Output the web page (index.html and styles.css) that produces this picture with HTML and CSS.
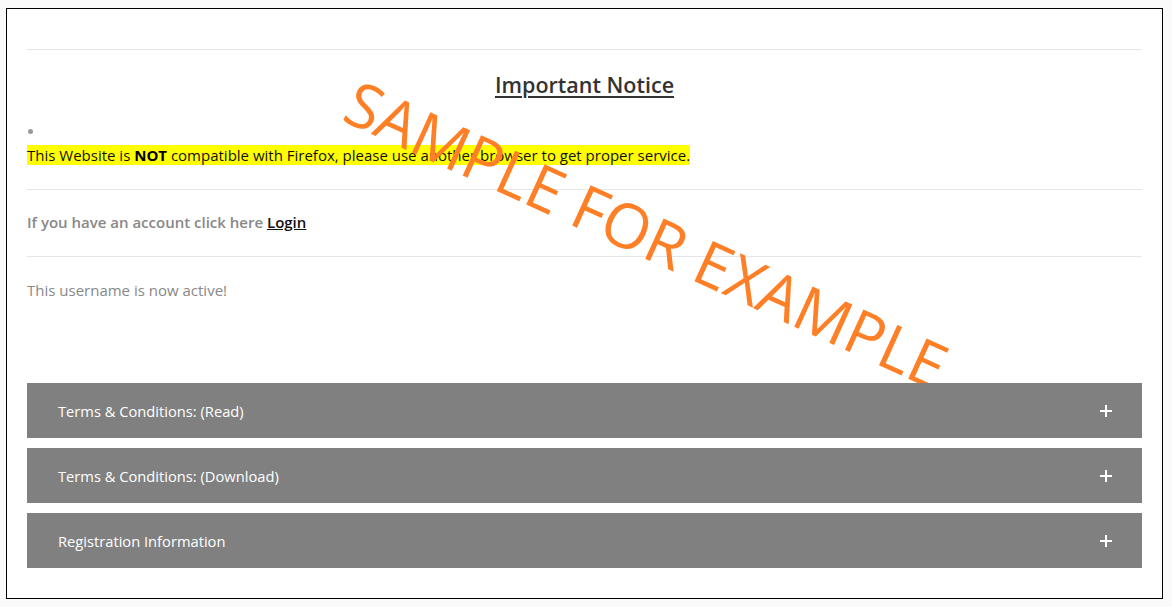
FILE: index.html
```html
<!DOCTYPE html>
<html lang="en">
<head>
<meta charset="utf-8">
<title>Important Notice</title>
<link rel="stylesheet" href="styles.css">
</head>
<body>
<div class="frame">
  <div class="rule top-rule"></div>
  <h2 class="title">Important Notice</h2>
  <div class="notice">
    <span class="dot"></span>
    <p class="warn"><mark>This Website is <b>NOT</b> compatible with Firefox, please use another browser to get proper service.</mark></p>
  </div>
  <div class="rule"></div>
  <p class="account">If you have an account click here <a href="#">Login</a></p>
  <div class="rule"></div>
  <p class="status">This username is now active!</p>
  <div class="accordion">
    <div class="acc-item"><span>Terms &amp; Conditions: (Read)</span><svg class="plus" width="12" height="12" viewBox="0 0 12 12"><rect x="5" y="0" width="2" height="12" fill="#fff"/><rect x="0" y="5" width="12" height="2" fill="#fff"/></svg></div>
    <div class="acc-item"><span>Terms &amp; Conditions: (Download)</span><svg class="plus" width="12" height="12" viewBox="0 0 12 12"><rect x="5" y="0" width="2" height="12" fill="#fff"/><rect x="0" y="5" width="12" height="2" fill="#fff"/></svg></div>
    <div class="acc-item"><span>Registration Information</span><svg class="plus" width="12" height="12" viewBox="0 0 12 12"><rect x="5" y="0" width="2" height="12" fill="#fff"/><rect x="0" y="5" width="12" height="2" fill="#fff"/></svg></div>
  </div>
  <div class="watermark">SAMPLE FOR EXAMPLE</div>
</div>
</body>
</html>
```
FILE: styles.css
```css
html, body {
  background: #fafafa;
}
body {
  margin: 8px 9px 8px 6px;
  font-family: "Open Sans", "Liberation Sans", sans-serif;
}
.frame {
  position: relative;
  background: #fff;
  border: 1px solid #000;
  height: 589px;
  padding: 0 20px;
  box-sizing: content-box;
  overflow: hidden;
}
.rule {
  height: 1px;
  background: #e6e6e6;
}
.top-rule {
  margin-top: 40px;
}
.title {
  margin: 20px 0 0;
  text-align: center;
  font-size: 21.5px;
  line-height: 30px;
  font-weight: 600;
  color: #333;
  text-decoration: underline;
  text-underline-offset: 3px;
  text-decoration-thickness: 2px;
}
.notice {
  padding-top: 29px;
  padding-bottom: 24px;
}
.dot {
  display: block;
  width: 5px;
  height: 5px;
  border-radius: 50%;
  background: #999;
  margin-left: 1px;
}
.warn {
  margin: 11px 0 0;
  font-size: 15px;
  line-height: 20px;
  color: #111;
}
.warn mark {
  background: #ffff00;
  color: #111;
  padding: 0;
}
.warn b {
  font-weight: 700;
  color: #000;
}
.account {
  margin: 0;
  padding: 21px 0 23px;
  font-size: 15px;
  line-height: 22px;
  font-weight: 600;
  color: #888;
}
.account a {
  color: #111;
  text-decoration: underline;
}
.status {
  margin: 0;
  padding: 22px 0 0;
  font-size: 15px;
  line-height: 22px;
  color: #888;
}
.accordion {
  margin-top: 82px;
  display: flex;
  flex-direction: column;
  gap: 10px;
  position: relative;
  z-index: 2;
}
.acc-item {
  height: 55px;
  background: #808080;
  color: #fff;
  font-size: 14.7px;
  display: flex;
  align-items: center;
  justify-content: space-between;
  padding: 0 30px 0 31px;
}
.plus {
  display: block;
}
.watermark {
  position: absolute;
  left: 330px;
  top: 55px;
  z-index: 1;
  font-family: "Open Sans", sans-serif;
  font-size: 62px;
  line-height: 1;
  color: #ff7f27;
  white-space: nowrap;
  transform-origin: 0 100%;
  transform: rotate(24.5deg);
  pointer-events: none;
}
```
